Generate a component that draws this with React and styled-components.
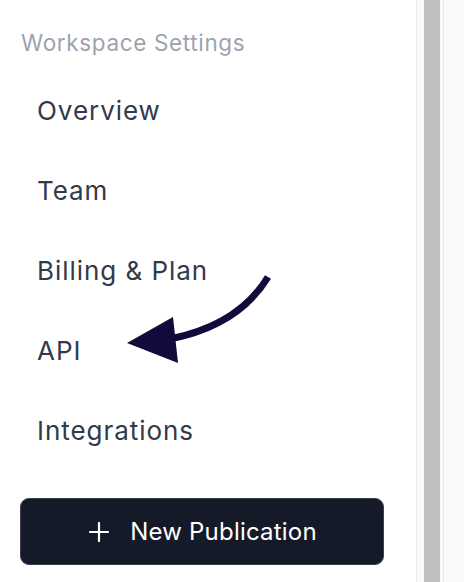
import React from "react";
import styled, { createGlobalStyle } from "styled-components";

const Global = createGlobalStyle`
  html, body { margin: 0; padding: 0; background: #ffffff; }
  body { font-family: Inter, "Noto Sans", sans-serif; -webkit-font-smoothing: antialiased; }
`;

const Page = styled.div`
  display: flex;
  height: 582px;
  width: 464px;
  overflow: hidden;
`;

const Sidebar = styled.aside`
  position: relative;
  width: 416px;
  flex: none;
  background: #ffffff;
  border-right: 1px solid #e8e8e8;
  box-sizing: content-box;
  display: flex;
  flex-direction: column;
`;

const Track = styled.div`
  width: 27px;
  flex: none;
  background: #fafafa;
  display: flex;
  justify-content: flex-start;
  padding-left: 7px;
  box-sizing: border-box;
  border-right: 1px solid #e8e8e8;
`;

const Thumb = styled.div`
  width: 16px;
  background: #c0c0c0;
`;

const Main = styled.main`
  flex: 1;
  background: #f9fafb;
`;

const Heading = styled.div`
  margin: 29px 0 0 21px;
  font-size: 22.5px;
  line-height: 28px;
  color: #9ca3af;
  letter-spacing: 0.65px;
`;

const Nav = styled.nav`
  display: flex;
  flex-direction: column;
  margin-top: 13px;
`;

const NavItem = styled.a`
  display: flex;
  align-items: center;
  height: 80px;
  padding-left: 37px;
  font-size: 26px;
  letter-spacing: 0.95px;
  color: #313a4a;
  text-decoration: none;
`;

const Button = styled.button`
  margin: 28px 0 0 20px;
  width: 364px;
  height: 67px;
  box-sizing: border-box;
  background: #151a28;
  border: 1px solid #3b404c;
  border-radius: 9px;
  color: #ffffff;
  font-family: Inter, "Noto Sans", sans-serif;
  font-size: 24px;
  letter-spacing: 0.2px;
  display: flex;
  align-items: center;
  justify-content: center;
  gap: 21px;
  padding: 0 0 0 2px;
`;

const Arrow = styled.svg`
  position: absolute;
  left: 120px;
  top: 268px;
  pointer-events: none;
`;

const PlusIcon = () => (
  <svg width="20" height="20" viewBox="0 0 20 20">
    <path d="M10 1v18M1 10h18" stroke="#fff" strokeWidth="2.2" strokeLinecap="round" />
  </svg>
);

export default function App() {
  return (
    <>
      <Global />
      <Page>
        <Sidebar>
          <Heading>Workspace Settings</Heading>
          <Nav>
            <NavItem>Overview</NavItem>
            <NavItem>Team</NavItem>
            <NavItem>Billing &amp; Plan</NavItem>
            <NavItem>API</NavItem>
            <NavItem>Integrations</NavItem>
          </Nav>
          <Button>
            <PlusIcon />
            <span>New Publication</span>
          </Button>
          <Arrow width="160" height="100" viewBox="120 268 160 100">
            <path d="M268 277 C 248 310, 215 330, 170 339" fill="none" stroke="#120a3a" strokeWidth="7" />
            <polygon points="127,343 173,317 178,363" fill="#120a3a" />
          </Arrow>
        </Sidebar>
        <Track>
          <Thumb />
        </Track>
        <Main />
      </Page>
    </>
  );
}
